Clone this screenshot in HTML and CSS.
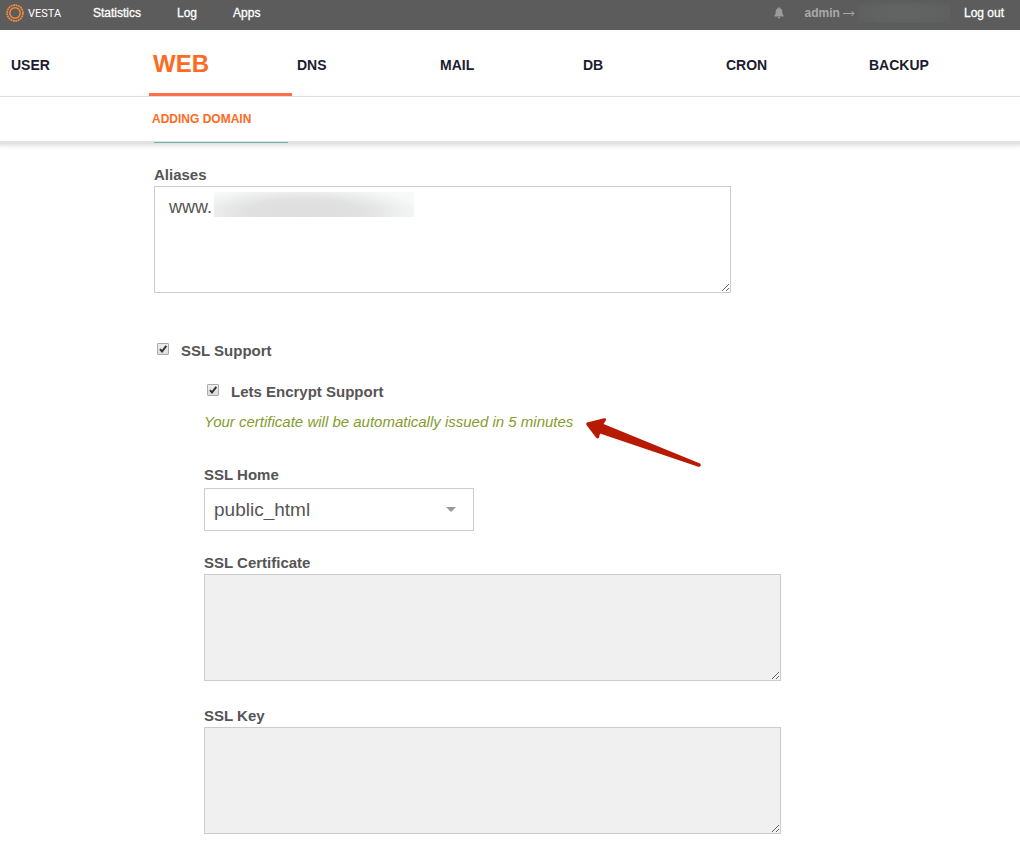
FILE: index.html
```html
<!DOCTYPE html>
<html lang="en">
<head>
    <meta charset="utf-8">
    <meta name="viewport" content="width=device-width, initial-scale=1">
    <title>Vesta - WEB</title>
    <link rel="stylesheet" href="styles.css">
</head>
<body>

<header class="top-bar">
    <a class="logo" href="/">
        <svg class="logo-icon" width="18" height="18" viewBox="0 0 18 18" fill="none" stroke="#f58b3c">
            <circle cx="9" cy="9" r="7.9" stroke-width="1.7" stroke-dasharray="2 0.5"/>
            <circle cx="9" cy="9" r="5.2" stroke-width="1.5"/>
        </svg>
        <span class="logo-text">VESTA</span>
    </a>
    <nav class="top-links">
        <a href="/list/rrd/">Statistics</a>
        <a href="/list/log/">Log</a>
        <a href="/list/softaculous/">Apps</a>
    </nav>
    <div class="top-user">
        <button class="bell" type="button" aria-label="Notifications">
            <svg width="10" height="12" viewBox="0 0 10 12" fill="#9b9b9b">
                <path d="M5 0.2C5.6 0.2 5.9 0.6 5.9 1.2C7.5 1.6 8.3 3 8.3 4.6C8.3 6.9 8.8 7.9 9.7 8.8V9.5H0.3V8.8C1.2 7.9 1.7 6.9 1.7 4.6C1.7 3 2.5 1.6 4.1 1.2C4.1 0.6 4.4 0.2 5 0.2Z"/>
                <path d="M3.7 10H6.3C6.2 10.9 5.7 11.4 5 11.4C4.3 11.4 3.8 10.9 3.7 10Z"/>
            </svg>
        </button>
        <a class="user-name" href="/edit/user/">admin
            <svg width="12" height="7" viewBox="0 0 12 7" fill="none" stroke="#aaaaaa">
                <path d="M0 3.5H11M8.5 1L11 3.5L8.5 6"/>
            </svg>
            <span class="user-hidden"></span>
        </a>
        <a class="logout" href="/logout/">Log out</a>
    </div>
</header>

<nav class="main-menu">
    <a href="/list/user/">USER</a>
    <a class="active" href="/list/web/">WEB</a>
    <a href="/list/dns/">DNS</a>
    <a href="/list/mail/">MAIL</a>
    <a href="/list/db/">DB</a>
    <a href="/list/cron/">CRON</a>
    <a href="/list/backup/">BACKUP</a>
</nav>

<div class="sub-menu">
    <h1>ADDING DOMAIN</h1>
</div>

<form class="domain-form" action="/add/web/" method="post">
    <div class="form-group aliases">
        <label for="aliases">Aliases</label>
        <div class="alias-box">
            <textarea id="aliases" name="v_aliases" spellcheck="false">www.</textarea>
            <span class="alias-hidden"></span>
        </div>
    </div>

    <div class="check-row">
        <input type="checkbox" id="ssl" name="v_ssl" checked>
        <label for="ssl">SSL Support</label>
    </div>

    <div class="ssl-options">
        <div class="check-row">
            <input type="checkbox" id="letsencrypt" name="v_letsencrypt" checked>
            <label for="letsencrypt">Lets Encrypt Support</label>
        </div>
        <p class="hint">Your certificate will be automatically issued in 5 minutes
            <svg class="hint-arrow" width="118" height="52" viewBox="0 0 118 52">
                <path d="M2 5.5L19 1.2Q22 1 20.8 3.5L18.500 7L115 46.5Q117 48.5 114 50L15 16.500L14 20.800Q12.500 22.500 11 20.500L1.500 8Q0.500 6.500 2 5.500Z" fill="#b71902"/>
            </svg>
        </p>
        <div class="form-group ssl-home">
            <label for="ssl-home">SSL Home</label>
            <select id="ssl-home" name="v_ssl_home">
                <option>public_html</option>
                <option>public_shtml</option>
            </select>
        </div>
        <div class="form-group">
            <label for="ssl-crt">SSL Certificate</label>
            <textarea id="ssl-crt" name="v_ssl_crt" disabled></textarea>
        </div>
        <div class="form-group">
            <label for="ssl-key">SSL Key</label>
            <textarea id="ssl-key" name="v_ssl_key" disabled></textarea>
        </div>
    </div>
</form>

</body>
</html>
```
FILE: styles.css
```css
* {
    box-sizing: border-box;
}
body {
    margin: 0;
    background-color: #fff;
    color: #555;
    font-family: Arial, "Liberation Sans", sans-serif;
    font-size: 15px;
}
a {
    text-decoration: none;
}

/* Top bar */
.top-bar {
    display: flex;
    align-items: center;
    height: 30px;
    padding: 0 16px 4px 6px;
    background-color: #5c5c5c;
    font-size: 12px;
}
.logo {
    display: flex;
    align-items: center;
    gap: 4px;
    width: 87px;
    color: #fff;
}
.logo-text {
    font-family: Roboto, "Liberation Sans", sans-serif;
    font-size: 11px;
}
.top-links {
    display: flex;
    gap: 36px;
}
.top-links a,
.logout {
    color: #fff;
    -webkit-text-stroke: 0.3px;
}
.top-user {
    display: flex;
    align-items: center;
    margin-left: auto;
}
.bell {
    display: flex;
    margin: 0 21px 0 0;
    padding: 0;
    border: none;
    background: none;
    cursor: pointer;
}
.user-name {
    display: flex;
    align-items: center;
    gap: 3px;
    margin-right: 14px;
    color: #aaa;
    font-weight: bold;
}
.user-hidden {
    width: 92px;
    height: 20px;
    background: radial-gradient(ellipse, #636565 0%, #616262 50%, #5d5d5d 100%);
}

/* Main menu */
.main-menu {
    display: grid;
    grid-template-columns: repeat(7, 1fr);
    height: 67px;
    padding: 0 13px 0 6px;
    border-bottom: 1px solid #ddd;
}
.main-menu a {
    display: flex;
    align-items: center;
    padding: 7px 5px 0;
    border-bottom: 3px solid transparent;
    color: #1c1c2e;
    font-size: 14px;
    font-weight: bold;
}
.main-menu .active {
    padding: 5px 4px 0;
    border-bottom-color: #ff6f4a;
    color: #ff6a22;
    font-size: 24px;
}

/* Page title */
.sub-menu {
    display: flex;
    height: 44px;
    padding-left: 152px;
    box-shadow: 0 3px 0 #e1e3e2, 0 3px 4px 2px #e1e3e2;
}
.sub-menu h1 {
    position: relative;
    margin: 0;
    color: #ff6a22;
    font-size: 12px;
    line-height: 44px;
}
.sub-menu h1::after {
    content: "";
    position: absolute;
    left: 2px;
    bottom: -2px;
    width: 134px;
    height: 1px;
    background-color: #71b0ad;
}

/* Form */
.domain-form {
    padding: 24px 16px 16px 154px;
}
.form-group label {
    display: block;
    margin-bottom: 1px;
    line-height: 20px;
}
label {
    font-weight: bold;
}
textarea {
    display: block;
    width: 577px;
    max-width: 100%;
    height: 107px;
    padding: 10px 14px;
    border: 1px solid #ccc;
    border-radius: 0;
    background-color: #fff;
    color: #555;
    font-family: inherit;
    font-size: 18px;
}
textarea:disabled {
    background-color: #f0f0f0;
}
.alias-box {
    position: relative;
}
.alias-hidden {
    position: absolute;
    left: 60px;
    top: 6px;
    width: 200px;
    height: 25px;
    background: radial-gradient(ellipse 60% 110% at 45% 85%, #dedede 0%, #e1e1e1 50%, #f7f8f8 100%);
}
.aliases {
    margin-bottom: 48px;
}
.check-row {
    display: flex;
    align-items: center;
    gap: 12px;
    padding-left: 3px;
    line-height: 20px;
}
.check-row input {
    appearance: none;
    width: 12px;
    height: 12px;
    margin: 0 0 4px;
    border: 1px solid #aaa;
    border-radius: 1px;
    background: url("data:image/svg+xml,%3Csvg xmlns='http://www.w3.org/2000/svg' viewBox='0 0 10 10'%3E%3Cpath d='M2 5.200L4 7.500L8.300 1.800' fill='none' stroke='%23333' stroke-width='2'/%3E%3C/svg%3E") center / 10px 10px no-repeat, linear-gradient(#eee, #ddd);
}
.ssl-options {
    padding: 21px 0 0 50px;
}
.hint {
    position: relative;
    width: max-content;
    margin: 10px 0 33px;
    color: #859c2f;
    font-style: italic;
    line-height: 20px;
}
.hint-arrow {
    position: absolute;
    left: 100%;
    top: 5px;
    margin-left: 12px;
}
.ssl-options .form-group {
    margin-bottom: 25px;
}
.ssl-options .ssl-home {
    margin-bottom: 22px;
}
.ssl-options .form-group:last-child {
    margin-bottom: 0;
}
select {
    appearance: none;
    display: block;
    width: 270px;
    height: 43px;
    margin-top: 3px;
    padding: 0 40px 0 9px;
    border: 1px solid #ccc;
    border-radius: 0;
    background: #fff url("data:image/svg+xml,%3Csvg xmlns='http://www.w3.org/2000/svg' viewBox='0 0 10 5'%3E%3Cpath d='M0 0H10L5 5Z' fill='%23999'/%3E%3C/svg%3E") right 17px center / 10px 5px no-repeat;
    color: #555;
    font-family: inherit;
    font-size: 19px;
}
```
